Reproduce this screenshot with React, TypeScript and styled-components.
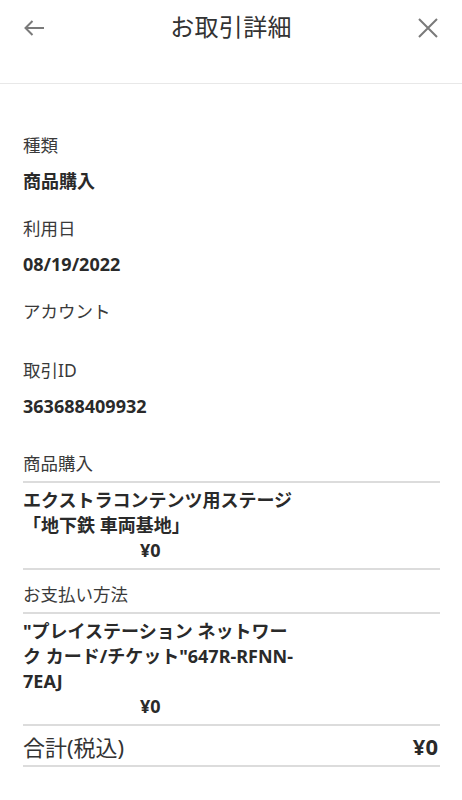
import styled, { createGlobalStyle } from "styled-components";

const GlobalStyle = createGlobalStyle`
    body {
        margin: 0;
        background: #ffffff;
        font-family: "Noto Sans", "Noto Sans CJK JP", sans-serif;
        color: #2e2e2e;
    }
`

const Page = styled.div`
    width: 462px;
    min-height: 800px;
    background: #ffffff;
`

const Header = styled.header`
    height: 84px;
    box-sizing: border-box;
    padding: 0 24px 28px;
    border-bottom: 1px solid #e8e8e8;
    display: flex;
    justify-content: space-between;
    align-items: center;
`

const Title = styled.h1`
    margin: 0 0 5px;
    font-size: 24px;
    font-weight: 400;
    color: #333;
    letter-spacing: 0.3px;
`

const IconButton = styled.button`
    width: 20px;
    height: 20px;
    padding: 0;
    border: none;
    background: none;
    display: flex;
    align-items: center;
    justify-content: center;
`

const Content = styled.main`
    padding: 49px 22px 0 23px;
`

const Fields = styled.div`
    display: flex;
    flex-direction: column;
    gap: 23px;
`

const Field = styled.div`
    display: flex;
    flex-direction: column;
    gap: 12px;
`

const Label = styled.div`
    font-size: 17.5px;
    line-height: 24px;
    color: #3a3a3a;
`

const Value = styled.div`
    font-size: 18px;
    line-height: 24px;
    font-weight: 700;
    color: #2a2a2a;
`

const Sections = styled.div`
    margin-top: 21px;
`

const SectionTitle = styled.div`
    padding: 12px 0 6px;
    font-size: 17.5px;
    line-height: 24px;
    color: #3a3a3a;
    border-bottom: 2px solid #dcdcdc;
`

const Item = styled.div`
    padding: 5px 0;
    border-bottom: 2px solid #dcdcdc;
`

const ItemName = styled.div`
    max-width: 275px;
    font-size: 18px;
    line-height: 25px;
    font-weight: 700;
    color: #2a2a2a;
`

const Price = styled.div`
    padding-left: 117px;
    font-size: 18px;
    line-height: 25px;
    font-weight: 700;
    color: #2a2a2a;
`

const TotalRow = styled.div`
    height: 39px;
    display: flex;
    justify-content: space-between;
    align-items: center;
    border-bottom: 2px solid #dcdcdc;
`

const TotalLabel = styled.span`
    font-size: 22px;
    color: #333;
`

const TotalValue = styled.span`
    margin-right: 2px;
    font-size: 22px;
    font-weight: 700;
    color: #2a2a2a;
`

const BackIcon = () => (
    <svg width="20" height="16" viewBox="0 0 20 16" fill="none" stroke="#7a7a7a" strokeWidth="2">
        <path d="M20 8H1.5M8.5 1L1.5 8l7 7" />
    </svg>
)

const CloseIcon = () => (
    <svg width="20" height="20" viewBox="0 0 20 20" fill="none" stroke="#7a7a7a" strokeWidth="2">
        <path d="M1 1l18 18M19 1L1 19" />
    </svg>
)

export default function App() {
    return (
        <Page>
            <GlobalStyle />
            <Header>
                <IconButton aria-label="戻る"><BackIcon /></IconButton>
                <Title>お取引詳細</Title>
                <IconButton aria-label="閉じる"><CloseIcon /></IconButton>
            </Header>
            <Content>
                <Fields>
                    <Field>
                        <Label>種類</Label>
                        <Value>商品購入</Value>
                    </Field>
                    <Field>
                        <Label>利用日</Label>
                        <Value>08/19/2022</Value>
                    </Field>
                    <Field>
                        <Label>アカウント</Label>
                        <Value></Value>
                    </Field>
                    <Field>
                        <Label>取引ID</Label>
                        <Value>363688409932</Value>
                    </Field>
                </Fields>
                <Sections>
                    <SectionTitle>商品購入</SectionTitle>
                    <Item>
                        <ItemName>エクストラコンテンツ用ステージ「地下鉄 車両基地」</ItemName>
                        <Price>¥0</Price>
                    </Item>
                    <SectionTitle>お支払い方法</SectionTitle>
                    <Item>
                        <ItemName>"プレイステーション ネットワーク カード/チケット"647R-RFNN-7EAJ</ItemName>
                        <Price>¥0</Price>
                    </Item>
                    <TotalRow>
                        <TotalLabel>合計(税込)</TotalLabel>
                        <TotalValue>¥0</TotalValue>
                    </TotalRow>
                </Sections>
            </Content>
        </Page>
    )
}
